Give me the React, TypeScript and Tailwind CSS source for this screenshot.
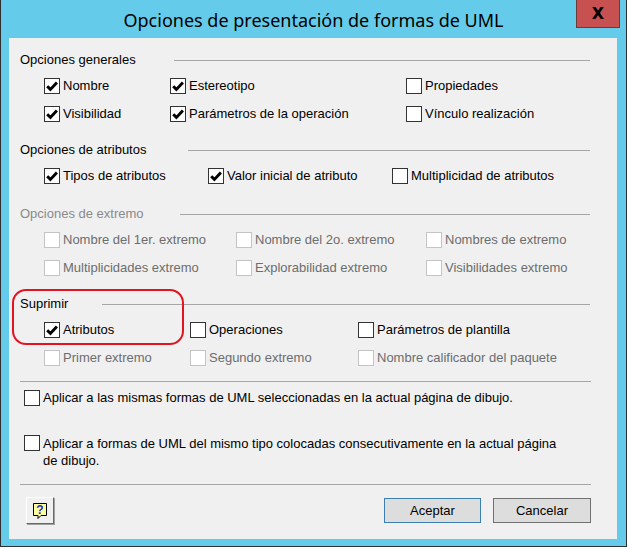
import type { ReactNode } from 'react'

interface CheckProps {
  label: ReactNode
  checked?: boolean
  disabled?: boolean
  width?: string
}

function Box({ checked, disabled }: { checked?: boolean; disabled?: boolean }) {
  return (
    <span
      className={`flex h-4 w-4 shrink-0 items-center justify-center border bg-white ${
        disabled ? 'border-[#c4c4c4]' : 'border-[#333333]'
      }`}
    >
      {checked && (
        <svg viewBox="0 0 14 14" className="h-[14px] w-[14px]">
          <path d="M2.2 7.2 L5.4 10.4 L11.9 3.5" fill="none" stroke="#000" strokeWidth="2.9" />
        </svg>
      )}
    </span>
  )
}

function Check({ label, checked, disabled, width }: CheckProps) {
  return (
    <div className={`flex items-center gap-[3px] ${width ?? ''}`}>
      <Box checked={checked} disabled={disabled} />
      <span className={`whitespace-nowrap ${disabled ? 'text-[#6d6d6d]' : 'text-black'}`}>{label}</span>
    </div>
  )
}

function GroupHeader({ label, labelWidth, disabled }: { label: string; labelWidth: string; disabled?: boolean }) {
  return (
    <div className="flex h-5 items-center pl-[11px] pr-[27px]">
      <span className={`shrink-0 ${labelWidth} ${disabled ? 'text-[#8a8a8a]' : 'text-black'}`}>{label}</span>
      <div className="h-px flex-1 bg-[#a6a6a6]" />
    </div>
  )
}

function HelpIcon() {
  return (
    <svg viewBox="0 0 16 18" className="h-[18px] w-4">
      <path d="M1.5 1.5 H14.5 V13.5 H9 L6 16.5 V13.5 H1.5 Z" fill="#ffff9c" stroke="#000" strokeWidth="1" />
      <text x="8" y="11.5" textAnchor="middle" fontSize="12" fontWeight="bold" fill="#1a2ad8" fontFamily="Liberation Sans, Arial, sans-serif">
        ?
      </text>
    </svg>
  )
}

export default function App() {
  return (
    <div className="h-[549px] w-[629px] bg-white font-['Liberation_Sans',Arial,sans-serif] text-[13px]">
      <div className="h-[547px] w-[627px] border-x border-b border-[#2f2f2f] bg-[#65cbea]">
        {/* Title bar */}
        <div className="relative flex h-[38px] items-center justify-center pt-[2px]">
          <span className="font-['Noto_Sans',sans-serif] text-[18px] text-black">
            Opciones de presentación de formas de UML
          </span>
          <div className="absolute right-[6px] top-0 flex h-[28px] w-[44px] items-center justify-center border-x border-b border-[#6b3a3a] bg-[#c75050]">
            <span className="font-['DejaVu_Sans',sans-serif] text-[16px] font-bold leading-none text-black">X</span>
          </div>
        </div>

        {/* Dialog body */}
        <div className="relative ml-[8px] h-[501px] w-[608px] bg-[#f0f0f0]">
          <div className="flex flex-col pt-[12px]">
            <GroupHeader label="Opciones generales" labelWidth="w-[154px]" />
            <div className="mt-[6px] flex h-5 items-center pl-[35px]">
              <Check label="Nombre" checked width="w-[126px]" />
              <Check label="Estereotipo" checked width="w-[236px]" />
              <Check label="Propiedades" />
            </div>
            <div className="mt-[8px] flex h-5 items-center pl-[35px]">
              <Check label="Visibilidad" checked width="w-[126px]" />
              <Check label="Parámetros de la operación" checked width="w-[236px]" />
              <Check label="Vínculo realización" />
            </div>

            <div className="mt-[16px]">
              <GroupHeader label="Opciones de atributos" labelWidth="w-[168px]" />
            </div>
            <div className="mt-[6px] flex h-5 items-center pl-[35px]">
              <Check label="Tipos de atributos" checked width="w-[164px]" />
              <Check label="Valor inicial de atributo" checked width="w-[184px]" />
              <Check label="Multiplicidad de atributos" />
            </div>

            <div className="mt-[18px]">
              <GroupHeader label="Opciones de extremo" labelWidth="w-[160px]" disabled />
            </div>
            <div className="mt-[6px] flex h-5 items-center pl-[35px]">
              <Check label="Nombre del 1er. extremo" disabled width="w-[192px]" />
              <Check label="Nombre del 2o. extremo" disabled width="w-[190px]" />
              <Check label="Nombres de extremo" disabled />
            </div>
            <div className="mt-[8px] flex h-5 items-center pl-[35px]">
              <Check label="Multiplicidades extremo" disabled width="w-[192px]" />
              <Check label="Explorabilidad extremo" disabled width="w-[190px]" />
              <Check label="Visibilidades extremo" disabled />
            </div>

            <div className="mt-[16px]">
              <GroupHeader label="Suprimir" labelWidth="w-[82px]" />
            </div>
            <div className="mt-[6px] flex h-5 items-center pl-[35px]">
              <Check label="Atributos" checked width="w-[146px]" />
              <Check label="Operaciones" width="w-[168px]" />
              <Check label="Parámetros de plantilla" />
            </div>
            <div className="mt-[8px] flex h-5 items-center pl-[35px]">
              <Check label="Primer extremo" disabled width="w-[146px]" />
              <Check label="Segundo extremo" disabled width="w-[168px]" />
              <Check label="Nombre calificador del paquete" disabled />
            </div>

            <div className="ml-[11px] mr-[26px] mt-[13px] h-px bg-[#a6a6a6]" />

            <div className="mt-[6px] flex h-5 items-center pl-[15px]">
              <Check label="Aplicar a las mismas formas de UML seleccionadas en la actual página de dibujo." />
            </div>

            <div className="mt-[25px] flex items-start gap-[3px] pl-[15px]">
              <div className="flex h-5 items-center">
                <Box />
              </div>
              <span className="pt-[2px] leading-[17px] text-black">
                Aplicar a formas de UML del mismo tipo colocadas consecutivamente en la actual página
                <br />
                de dibujo.
              </span>
            </div>

            <div className="ml-[11px] mr-[26px] mt-[15px] h-px bg-[#a6a6a6]" />

            <div className="mt-[12px] flex items-start pl-[17px] pr-[26px]">
              <div className="flex h-[27px] w-[28px] items-center justify-center border border-b-[#696969] border-l-white border-r-[#696969] border-t-white bg-[#f0f0f0] shadow-[1px_1px_0_#a0a0a0]">
                <HelpIcon />
              </div>
              <div className="flex-1" />
              <div className="mt-[1px] flex gap-[12px]">
                <button className="flex h-[25px] w-[97px] items-center justify-center border border-[#3c7fb1] bg-[#dddddd] text-black">
                  Aceptar
                </button>
                <button className="flex h-[25px] w-[98px] items-center justify-center border border-[#707070] bg-[#dddddd] text-black">
                  Cancelar
                </button>
              </div>
            </div>
          </div>

          {/* Red annotation around "Suprimir / Atributos" */}
          <div className="pointer-events-none absolute left-[3px] top-[251px] h-[56px] w-[172px] rounded-[14px] border-2 border-[#e3141f]" />
        </div>
      </div>
    </div>
  )
}
